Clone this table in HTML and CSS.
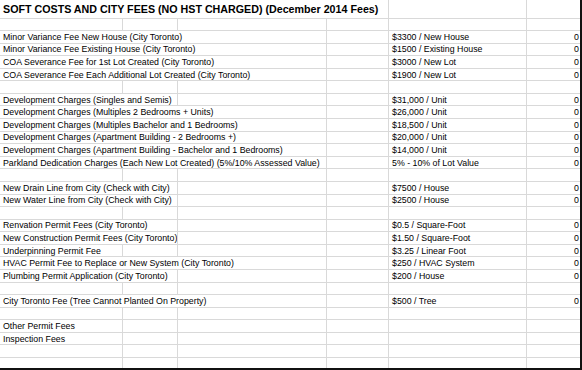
FILE: index.html
```html
<!DOCTYPE html>
<html>
<head>
<meta charset="utf-8">
<link rel="stylesheet" href="styles.css">
</head>
<body>
<div class="sheet">
  <div class="row title"><div class="c s4 head">SOFT COSTS AND CITY FEES (NO HST CHARGED) (December 2014 Fees)</div><div class="c"></div><div class="c"></div></div>
  <div class="row first"><div class="c"></div><div class="c"></div><div class="c"></div><div class="c"></div><div class="c"></div><div class="c"></div></div>

  <div class="row"><div class="c s3">Minor Variance Fee New House (City Toronto)</div><div class="c"></div><div class="c">$3300 / New House</div><div class="c n">0</div></div>
  <div class="row"><div class="c s3">Minor Variance Fee Existing House (City Toronto)</div><div class="c"></div><div class="c">$1500 / Existing House</div><div class="c n">0</div></div>
  <div class="row"><div class="c s3">COA Severance Fee for 1st Lot Created (City Toronto)</div><div class="c"></div><div class="c">$3000 / New Lot</div><div class="c n">0</div></div>
  <div class="row"><div class="c s3">COA Severance Fee Each Additional Lot Created (City Toronto)</div><div class="c"></div><div class="c">$1900 / New Lot</div><div class="c n">0</div></div>
  <div class="row"><div class="c"></div><div class="c"></div><div class="c"></div><div class="c"></div><div class="c"></div><div class="c"></div></div>

  <div class="row"><div class="c s2">Development Charges (Singles and Semis)</div><div class="c"></div><div class="c"></div><div class="c">$31,000 / Unit</div><div class="c n">0</div></div>
  <div class="row"><div class="c s3">Development Charges (Multiples 2 Bedrooms + Units)</div><div class="c"></div><div class="c">$26,000 / Unit</div><div class="c n">0</div></div>
  <div class="row"><div class="c s3">Development Charges (Multiples Bachelor and 1 Bedrooms)</div><div class="c"></div><div class="c">$18,500 / Unit</div><div class="c n">0</div></div>
  <div class="row"><div class="c s3">Development Charges (Apartment Building - 2 Bedrooms +)</div><div class="c"></div><div class="c">$20,000 / Unit</div><div class="c n">0</div></div>
  <div class="row"><div class="c s3">Development Charges (Apartment Building - Bachelor and 1 Bedrooms)</div><div class="c"></div><div class="c">$14,000 / Unit</div><div class="c n">0</div></div>
  <div class="row"><div class="c s3">Parkland Dedication Charges (Each New Lot Created) (5%/10% Assessed Value)</div><div class="c"></div><div class="c">5% - 10% of Lot Value</div><div class="c n">0</div></div>
  <div class="row"><div class="c"></div><div class="c"></div><div class="c"></div><div class="c"></div><div class="c"></div><div class="c"></div></div>

  <div class="row"><div class="c s2">New Drain Line from City (Check with City)</div><div class="c"></div><div class="c"></div><div class="c">$7500 / House</div><div class="c n">0</div></div>
  <div class="row"><div class="c s2">New Water Line from City (Check with City)</div><div class="c"></div><div class="c"></div><div class="c">$2500 / House</div><div class="c n">0</div></div>
  <div class="row"><div class="c"></div><div class="c"></div><div class="c"></div><div class="c"></div><div class="c"></div><div class="c"></div></div>

  <div class="row"><div class="c s2">Renvation Permit Fees (City Toronto)</div><div class="c"></div><div class="c"></div><div class="c">$0.5 / Square-Foot</div><div class="c n">0</div></div>
  <div class="row"><div class="c s2">New Construction Permit Fees (City Toronto)</div><div class="c"></div><div class="c"></div><div class="c">$1.50 / Square-Foot</div><div class="c n">0</div></div>
  <div class="row"><div class="c">Underpinning Permit Fee</div><div class="c"></div><div class="c"></div><div class="c"></div><div class="c">$3.25 / Linear Foot</div><div class="c n">0</div></div>
  <div class="row"><div class="c s3">HVAC Permit Fee to Replace or New System (City Toronto)</div><div class="c"></div><div class="c">$250 / HVAC System</div><div class="c n">0</div></div>
  <div class="row"><div class="c s2">Plumbing Permit Application (City Toronto)</div><div class="c"></div><div class="c"></div><div class="c">$200 / House</div><div class="c n">0</div></div>
  <div class="row"><div class="c"></div><div class="c"></div><div class="c"></div><div class="c"></div><div class="c"></div><div class="c"></div></div>

  <div class="row"><div class="c s3">City Toronto Fee (Tree Cannot Planted On Property)</div><div class="c"></div><div class="c">$500 / Tree</div><div class="c n">0</div></div>
  <div class="row"><div class="c"></div><div class="c"></div><div class="c"></div><div class="c"></div><div class="c"></div><div class="c"></div></div>

  <div class="row"><div class="c">Other Permit Fees</div><div class="c"></div><div class="c"></div><div class="c"></div><div class="c"></div><div class="c"></div></div>
  <div class="row"><div class="c">Inspection Fees</div><div class="c"></div><div class="c"></div><div class="c"></div><div class="c"></div><div class="c"></div></div>
  <div class="row"><div class="c"></div><div class="c"></div><div class="c"></div><div class="c"></div><div class="c"></div><div class="c"></div></div>
  <div class="row"><div class="c"></div><div class="c"></div><div class="c"></div><div class="c"></div><div class="c"></div><div class="c"></div></div>
  <div class="row"><div class="c"></div><div class="c"></div><div class="c"></div><div class="c"></div><div class="c"></div><div class="c"></div></div>
</div>
</body>
</html>
```

FILE: styles.css
```css
html, body {
  margin: 0;
  padding: 0;
  background: #ffffff;
}

.sheet {
  width: 582px;
  height: 370px;
  box-sizing: border-box;
  border-right: 2px solid #111111;
  border-bottom: 2px solid #111111;
  overflow: hidden;
  background: #ffffff;
  font-family: "Liberation Sans", Arial, sans-serif;
  font-size: 8.8px;
  color: #000000;
}

.row {
  display: grid;
  grid-template-columns: 123px 55px 149px 62px 138px 53px;
  height: 12.58px;
}

.row.title {
  height: 19px;
}

.row.first {
  height: 12px;
}

.c {
  box-sizing: border-box;
  border-right: 1px solid #d9d9d9;
  border-bottom: 1px solid #d9d9d9;
  padding-left: 3px;
  white-space: nowrap;
  overflow: hidden;
  display: flex;
  align-items: center;
}

.c:last-child {
  border-right: none;
}

.s2 { grid-column: span 2; }
.s3 { grid-column: span 3; }
.s4 { grid-column: span 4; }

.head {
  font-weight: bold;
  font-size: 10.7px;
  color: #000000;
  padding-left: 3px;
}

.n {
  justify-content: flex-end;
  padding-left: 0;
  padding-right: 1px;
}
```
